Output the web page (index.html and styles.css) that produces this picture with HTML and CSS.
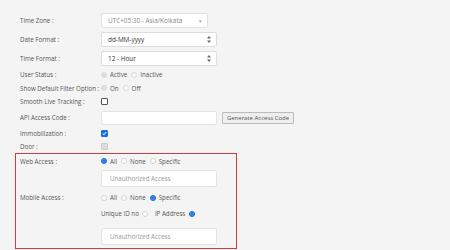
FILE: index.html
```html
<!DOCTYPE html>
<html lang="en">
  <head>
    <meta charset="UTF-8" />
    <link rel="stylesheet" href="styles.css">
    <title>Settings</title>
  </head>
  <body>
    <div class="settings">
      <div class="row r-sel">
        <span class="label">Time Zone :</span>
        <div class="select short"><span>UTC+05:30 - Asia/Kolkata</span><span class="caret">&#9662;</span></div>
      </div>
      <div class="row r-sel">
        <span class="label">Date Format :</span>
        <div class="select">
          <span>dd-MM-yyyy</span>
          <svg class="updown" width="4" height="7" viewBox="0 0 4 7"><path d="M2 0L4 2.5H0Z M2 7L4 4.5H0Z" fill="#666"/></svg>
        </div>
      </div>
      <div class="row r-sel">
        <span class="label">Time Format :</span>
        <div class="select">
          <span>12 - Hour</span>
          <svg class="updown" width="4" height="7" viewBox="0 0 4 7"><path d="M2 0L4 2.5H0Z M2 7L4 4.5H0Z" fill="#666"/></svg>
        </div>
      </div>
      <div class="row r-txt">
        <span class="label">User Status :</span>
        <div class="opts">
          <span class="radio off"></span><span>Active</span>
          <span class="radio off empty"></span><span>Inactive</span>
        </div>
      </div>
      <div class="row r-txt r-tall">
        <span class="label">Show Default Filter Option :</span>
        <div class="opts">
          <span class="radio off"></span><span>On</span>
          <span class="radio off empty"></span><span>Off</span>
        </div>
      </div>
      <div class="row r-txt">
        <span class="label">Smooth Live Tracking :</span>
        <div class="opts"><span class="check"></span></div>
      </div>
      <div class="row r-inp">
        <span class="label">API Access Code :</span>
        <div class="opts">
          <div class="input"></div>
          <button class="gen">Generate Access Code</button>
        </div>
      </div>
      <div class="row r-txt">
        <span class="label">Immobilization :</span>
        <div class="opts">
          <span class="check on">
            <svg width="5" height="5" viewBox="0 0 5 5"><path d="M0.7 2.6L2 3.8L4.3 1" stroke="#fff" stroke-width="1" fill="none"/></svg>
          </span>
        </div>
      </div>
      <div class="row r-txt">
        <span class="label">Door :</span>
        <div class="opts"><span class="check dis"></span></div>
      </div>
      <div class="access-box">
        <div class="row r-web">
          <span class="label">Web Access :</span>
          <div class="opts">
            <span class="radio sel"></span><span>All</span>
            <span class="radio"></span><span>None</span>
            <span class="radio"></span><span>Specific</span>
          </div>
        </div>
        <div class="row r-box">
          <span class="label"></span>
          <div class="input ph">Unauthorized Access</div>
        </div>
        <div class="row r-mob">
          <span class="label">Mobile Access :</span>
          <div class="opts">
            <span class="radio"></span><span>All</span>
            <span class="radio"></span><span>None</span>
            <span class="radio sel"></span><span>Specific</span>
          </div>
        </div>
        <div class="row r-txt">
          <span class="label"></span>
          <div class="opts">
            <span>Unique ID no</span><span class="radio"></span>
            <span class="ip">IP Address</span><span class="radio sel"></span>
          </div>
        </div>
        <div class="row r-box r-last">
          <span class="label"></span>
          <div class="input ph">Unauthorized Access</div>
        </div>
      </div>
    </div>
  </body>
</html>
```

FILE: styles.css
```css
* {
  margin: 0;
  padding: 0;
  box-sizing: border-box;
}
body {
  background: #f4f4f4;
  font-family: "Open Sans", "Noto Sans", sans-serif;
  font-size: 6.2px;
  color: #555;
  width: 450px;
  height: 250px;
  overflow: hidden;
}
.settings {
  padding: 11px 0 0 15px;
}
.row {
  display: flex;
  align-items: center;
  padding-left: 5px;
}
.label {
  width: 81px;
  flex-shrink: 0;
  white-space: nowrap;
}
.r-sel {
  height: 19px;
}
.r-txt {
  height: 13px;
}
.r-tall {
  height: 14px;
}
.r-inp {
  height: 19px;
}
.r-web {
  height: 14px;
}
.r-box {
  height: 20px;
}
.r-mob {
  height: 19px;
}
.r-last {
  height: 25px;
  align-items: flex-end;
}
.select {
  width: 116px;
  height: 15px;
  background: #fff;
  border: 1px solid #ddd;
  border-radius: 2px;
  display: flex;
  align-items: center;
  justify-content: space-between;
  padding: 0 5px 0 6px;
  color: #333;
  font-size: 6.4px;
}
.select.short {
  width: 107px;
  color: #888;
  border-color: #e2e2e2;
}
.caret {
  font-size: 5px;
  color: #999;
}
.opts {
  display: flex;
  align-items: center;
  gap: 3px;
}
.radio {
  width: 6px;
  height: 6px;
  border-radius: 50%;
  border: 1px solid #d4d4d4;
  background: #fff;
  display: inline-block;
}
.radio + span {
  margin-right: 1px;
}
.radio.off {
  background: #ddd;
  border-color: #ddd;
}
.radio.off.empty {
  background: #f8f8f8;
}
.radio.sel {
  background: #1a6fe0;
  border-color: #1a6fe0;
  box-shadow: inset 0 0 0 1px #4d8ff0;
}
.ip {
  margin-left: 4px;
  margin-right: 2px;
}
.check {
  width: 7px;
  height: 7px;
  border: 1px solid #555;
  border-radius: 1px;
  background: #fff;
  display: inline-flex;
  align-items: center;
  justify-content: center;
}
.check.on {
  background: #1a6fe0;
  border-color: #1a6fe0;
}
.check.dis {
  background: #ddd;
  border-color: #ccc;
}
.input {
  width: 116px;
  height: 14px;
  background: #fff;
  border: 1px solid #e4e4e4;
  border-radius: 2px;
}
.input.ph {
  height: 17px;
  display: flex;
  align-items: center;
  padding-left: 8px;
  color: #999;
}
.gen {
  margin-left: 2px;
  height: 12px;
  width: 72px;
  font-family: inherit;
  font-size: 6px;
  color: #555;
  background: #eee;
  border: 1px solid #bbb;
  border-radius: 1px;
}
.access-box {
  width: 222px;
  border: 1px solid #d63a3a;
  padding: 0 0 3px 4px;
}
.access-box .row {
  padding-left: 0;
}
```
